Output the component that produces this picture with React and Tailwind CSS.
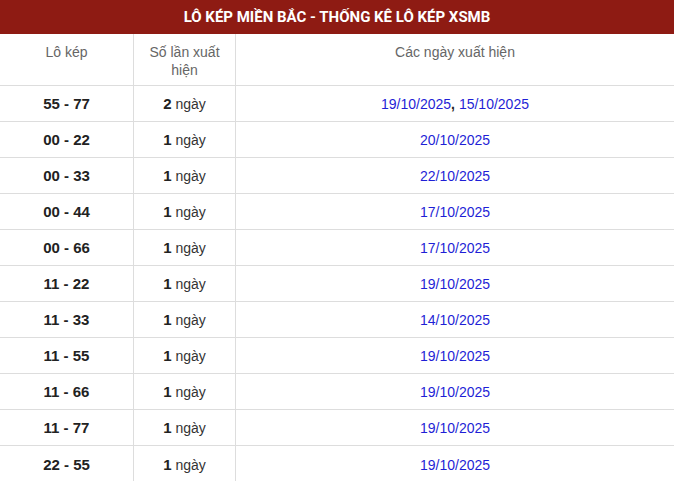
import React from "react";

const rows = [
  ["55 - 77", 2, ["19/10/2025", "15/10/2025"]],
  ["00 - 22", 1, ["20/10/2025"]],
  ["00 - 33", 1, ["22/10/2025"]],
  ["00 - 44", 1, ["17/10/2025"]],
  ["00 - 66", 1, ["17/10/2025"]],
  ["11 - 22", 1, ["19/10/2025"]],
  ["11 - 33", 1, ["14/10/2025"]],
  ["11 - 55", 1, ["19/10/2025"]],
  ["11 - 66", 1, ["19/10/2025"]],
  ["11 - 77", 1, ["19/10/2025"]],
  ["22 - 55", 1, ["19/10/2025"]],
];

export default function App() {
  return (
    <div className="w-[674px] bg-white font-['Liberation_Sans',Arial,sans-serif]">
      <div className="h-[34px] bg-[#8e1b13] flex items-center justify-center text-white font-['Roboto',sans-serif] font-bold text-[15px]">
        LÔ KÉP MIỀN BẮC - THỐNG KÊ LÔ KÉP XSMB
      </div>
      <table className="w-full border-separate border-spacing-0 table-fixed">
        <colgroup>
          <col className="w-[134px]" />
          <col className="w-[102px]" />
          <col />
        </colgroup>
        <thead>
          <tr className="h-[52px]">
            <th className="align-top pt-[9px] font-normal text-[14px] leading-[18px] text-[#666] border-r border-b border-[#dddddd]">Lô kép</th>
            <th className="align-top pt-[9px] px-[8px] font-normal text-[14px] leading-[18px] text-[#666] border-r border-b border-[#dddddd]">Số lần xuất hiện</th>
            <th className="align-top pt-[9px] font-normal text-[14px] leading-[18px] text-[#666] border-b border-[#dddddd]">Các ngày xuất hiện</th>
          </tr>
        </thead>
        <tbody>
          {rows.map(([k, n, d], i) => {
            const b = i < rows.length - 1 ? "border-b border-[#dddddd]" : "";
            return (
              <tr key={i} className="h-[36px]">
                <td className={`pt-[2px] text-center font-bold text-[15px] text-[#222] border-r border-[#dddddd] ${b}`}>{k}</td>
                <td className={`pt-[2px] text-center text-[14px] text-[#333] border-r border-[#dddddd] ${b}`}><b className="text-[#222] text-[15px]">{n}</b> ngày</td>
                <td className={`pt-[2px] text-center text-[14px] text-[#1f1fd6] ${b}`}>
                  {d.map((x, j) => (
                    <React.Fragment key={j}>
                      {j > 0 && <b className="text-[#222]">, </b>}
                      {x}
                    </React.Fragment>
                  ))}
                </td>
              </tr>
            );
          })}
        </tbody>
      </table>
    </div>
  );
}
